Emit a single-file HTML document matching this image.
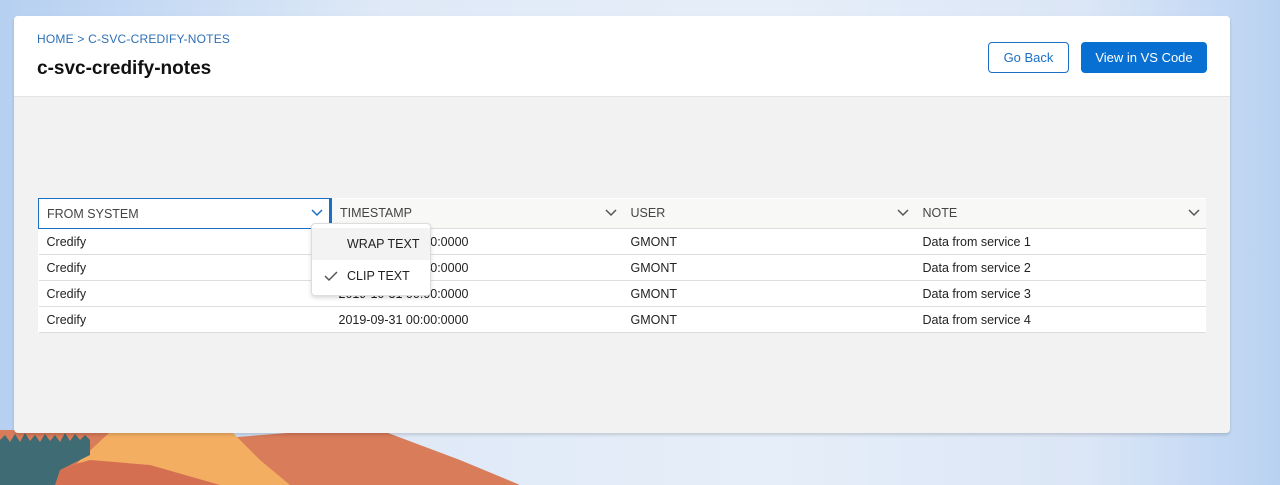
<!DOCTYPE html>
<html><head><style>
*{box-sizing:border-box;margin:0;padding:0}
body{width:1280px;height:485px;overflow:hidden;position:relative;font-family:"Liberation Sans",sans-serif;background:linear-gradient(90deg,#b6d0f1 0%,#dfe9f7 30%,#e6eef9 60%,#dbe6f6 85%,#b9d2f2 100%);}
.card{position:absolute;left:14px;top:16px;width:1216px;height:417px;background:#f2f2f2;border-radius:4px;box-shadow:0 2px 3px rgba(0,0,0,.15);overflow:hidden}
.hd{height:81px;background:#fff;border-bottom:1px solid #e4e4e4;position:relative}
.bc{position:absolute;left:23px;top:16px;font-size:12px;color:#2e6fb5;letter-spacing:.2px}
.tt{position:absolute;left:23px;top:42px;font-size:19px;font-weight:bold;color:#111}
.btn{position:absolute;top:26px;height:31px;border-radius:4px;font-size:13px;display:flex;align-items:center;justify-content:center}
.b1{left:974px;width:81px;border:1px solid #1b6fc4;color:#1b6fc4;background:#fff}
.b2{left:1067px;width:126px;background:#0870d2;color:#fff}
table{position:absolute;left:24px;top:182px;width:1168px;border-collapse:collapse;font-size:12.5px;color:#222;background:#fff}
th{height:30px;background:#f8f8f7;text-align:left;font-weight:normal;color:#444;padding-left:8px;position:relative;border-bottom:1px solid #ddd}
td{height:26px;padding-left:8px;border-bottom:1px solid #ddd}
th svg{position:absolute;right:6px;top:10px}
th.a{background:#fff;border:1px solid #1b6fc4;border-right:3px solid #1b6fc4}
.menu{position:absolute;left:297px;top:207px;width:120px;height:73px;background:#fff;border:1px solid #ddd;border-radius:4px;box-shadow:0 2px 4px rgba(0,0,0,.15);font-size:12.5px;color:#222}
.mi{height:32px;display:flex;align-items:center;padding-left:35px;position:relative}
.mi.h{background:#f3f3f3;margin-top:4px}
</style></head><body>
<svg style="position:absolute;left:0;top:420px" width="560" height="65">
<path d="M0 10 L100 10 L180 10 L200 20 L300 12 L380 10 L460 40 L520 65 L0 65Z" fill="#d97c5a"/>
<path d="M80 40 L110 12 L230 10 L260 40 L290 65 L60 65Z" fill="#f3ae62"/>
<path d="M55 50 L90 40 L150 45 L220 65 L50 65Z" fill="#d46f52"/>
<path d="M0 20 L5 15 L10 22 L15 14 L20 22 L25 13 L30 21 L35 15 L40 22 L45 14 L50 21 L55 15 L60 22 L65 13 L70 21 L75 14 L80 20 L85 15 L90 20 L90 35 L60 50 L55 65 L0 65Z" fill="#3f6b74"/>
</svg>
<div class="card">
<div class="hd">
<div class="bc">HOME &gt; C-SVC-CREDIFY-NOTES</div>
<div class="tt">c-svc-credify-notes</div>
<div class="btn b1">Go Back</div>
<div class="btn b2">View in VS Code</div>
</div>
<table>
<tr><th class="a" style="width:292px">FROM SYSTEM<svg width="12" height="8"><path d="M1 1L6 6L11 1" stroke="#1b6fc4" stroke-width="1.5" fill="none"/></svg></th>
<th style="width:292px">TIMESTAMP<svg width="12" height="8"><path d="M1 1L6 6L11 1" stroke="#555" stroke-width="1.5" fill="none"/></svg></th>
<th style="width:292px">USER<svg width="12" height="8"><path d="M1 1L6 6L11 1" stroke="#555" stroke-width="1.5" fill="none"/></svg></th>
<th>NOTE<svg width="12" height="8"><path d="M1 1L6 6L11 1" stroke="#555" stroke-width="1.5" fill="none"/></svg></th></tr>
<tr><td>Credify</td><td>2019-10-31 00:00:0000</td><td>GMONT</td><td>Data from service 1</td></tr>
<tr><td>Credify</td><td>2019-10-31 00:00:0000</td><td>GMONT</td><td>Data from service 2</td></tr>
<tr><td>Credify</td><td>2019-10-31 00:00:0000</td><td>GMONT</td><td>Data from service 3</td></tr>
<tr><td>Credify</td><td>2019-09-31 00:00:0000</td><td>GMONT</td><td>Data from service 4</td></tr>
</table>
<div class="menu">
<div class="mi h">WRAP TEXT</div>
<div class="mi"><svg style="position:absolute;left:12px;top:11px" width="14" height="11"><path d="M1 5L5 9L13 1" stroke="#555" stroke-width="1.5" fill="none"/></svg>CLIP TEXT</div>
</div>
</div>
</body></html>
